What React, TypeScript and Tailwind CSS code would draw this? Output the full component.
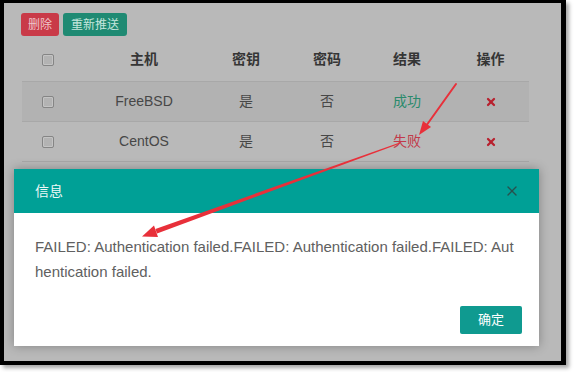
import { X } from "lucide-react"

const cols = ["w-[52px]", "w-[140px]", "w-[64px]", "w-[98px]", "w-[62px]", "w-[91px] pl-[14px]"]

type Row = { host: string; key: string; pwd: string; ok: boolean; striped: boolean }

const rows: Row[] = [
  { host: "FreeBSD", key: "是", pwd: "否", ok: true, striped: true },
  { host: "CentOS", key: "是", pwd: "否", ok: false, striped: false },
]

function Checkbox() {
  return <span className="block w-[12px] h-[12px] rounded-[2px] border border-[#858585] bg-[#b3b3b3] shadow-[inset_0_0_0_1px_#c4c4c4]" />
}

function Cell({ i, children, className = "" }: { i: number; children: React.ReactNode; className?: string }) {
  return <div className={`${cols[i]} flex items-center justify-center ${className}`}>{children}</div>
}

export default function App() {
  return (
    <div className="relative w-[574px] h-[372px] bg-white overflow-hidden" style={{ fontFamily: '"Liberation Sans", "Noto Sans CJK SC", sans-serif' }}>
      <div className="w-[566px] h-[365px] border-black border-l-4 border-r-[5px] border-t-[3px] border-b-4 shadow-[3px_3px_4px_rgba(0,0,0,0.35)]">
        <div className="relative w-full h-full bg-[#b9b9b9] overflow-hidden">
          <div className="flex gap-[4px] pt-[10px] pl-[17px]">
            <button className="h-[23px] w-[38px] rounded-[3px] bg-[#c93a48] text-[12px] text-[#efc6cb] flex items-center justify-center">删除</button>
            <button className="h-[23px] w-[64px] rounded-[3px] bg-[#1f8a73] text-[12px] text-[#c5e6dd] flex items-center justify-center">重新推送</button>
          </div>

          <div className="ml-[18px] mt-[2px] w-[507px] text-[14px]">
            <div className="flex h-[44px] border-b border-[#a8a8a8] font-bold text-[#353535]">
              <Cell i={0}><Checkbox /></Cell>
              <Cell i={1}>主机</Cell>
              <Cell i={2}>密钥</Cell>
              <Cell i={3}>密码</Cell>
              <Cell i={4}>结果</Cell>
              <Cell i={5}>操作</Cell>
            </div>
            {rows.map((r) => (
              <div key={r.host} className={`flex h-[40px] border-b border-[#a8a8a8] text-[#474747] ${r.striped ? "bg-[#b2b2b2]" : ""}`}>
                <Cell i={0}><Checkbox /></Cell>
                <Cell i={1}>{r.host}</Cell>
                <Cell i={2}>{r.key}</Cell>
                <Cell i={3}>{r.pwd}</Cell>
                <Cell i={4} className={r.ok ? "text-[#2a8a6c]" : "text-[#c23a4a]"}>{r.ok ? "成功" : "失败"}</Cell>
                <Cell i={5}>
                  <X className="w-[12px] h-[12px] text-[#b8202e]" strokeWidth={4.5} />
                </Cell>
              </div>
            ))}
          </div>

          <div className="absolute left-[10px] top-[166px] w-[525px] bg-white shadow-[0_0_10px_rgba(0,0,0,0.3)]">
            <div className="h-[44px] bg-[#00a096] flex items-center justify-between pl-[21px] pr-[19px]">
              <span className="text-[14px] text-[#eef8f7]">信息</span>
              <X className="w-[16px] h-[16px] text-[#27514e]" strokeWidth={2} />
            </div>
            <div className="pt-[21px] pl-[21px] pr-[20px] text-[15px] leading-[25px] text-[#606060] break-all">
              FAILED: Authentication failed.FAILED: Authentication failed.FAILED: Authentication failed.
            </div>
            <div className="flex justify-end pt-[22px] pr-[17px] pb-[12px]">
              <button className="h-[28px] w-[62px] rounded-[2px] bg-[#0f9a90] text-[13px] text-white flex items-center justify-center">确定</button>
            </div>
          </div>
        </div>
      </div>

      <svg className="absolute inset-0 pointer-events-none" width="574" height="372" viewBox="0 0 574 372">
        <line x1="456" y1="84" x2="426" y2="126" stroke="#e8303a" strokeWidth="2" strokeLinecap="round" />
        <polygon points="419,135 423,121 431,127" fill="#e8303a" />
        <polygon points="399.8,142.5 400.2,143.5 157,233.5 155.4,229" fill="#e8303a" />
        <polygon points="142,236.5 154,225.5 158,237" fill="#e8303a" />
      </svg>
    </div>
  )
}
